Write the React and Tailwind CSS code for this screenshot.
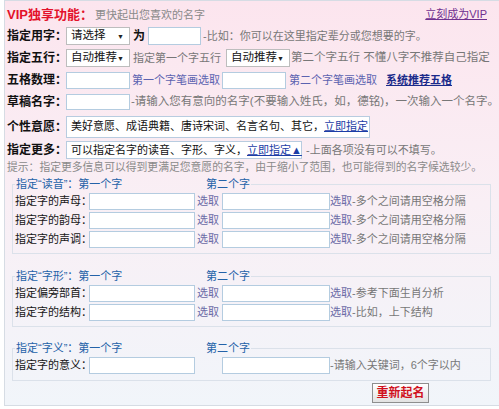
import React from "react";

function Sel({ text }) {
  return (
    <div className="flex items-center justify-between w-[64px] h-[18px] shrink-0 border border-[#bdbdbd] bg-white pl-[4px] pr-[5px]">
      <span className="text-[11.5px] text-[#111]">{text}</span>
      <span className="text-[7px] text-[#222]">▼</span>
    </div>
  );
}

function Field({ w, h = "h-[17px]" }) {
  return <input readOnly className={`${w} ${h} shrink-0 border border-[#b4cce0] bg-white outline-none`} />;
}

function Label({ children }) {
  return <span className="w-[59px] shrink-0 whitespace-nowrap text-[12px] font-bold text-[#111]">{children}</span>;
}

function SubRow({ label, pick = true, note }) {
  return (
    <div className="flex items-center h-[19px] whitespace-nowrap">
      <span className="w-[74px] shrink-0 text-[#151515]">{label}</span>
      <Field w="w-[106px]" />
      <span className="w-[27px] shrink-0 pl-[2px] text-[#6b6aa6]">{pick ? "选取" : ""}</span>
      <Field w="w-[108px]" />
      {pick && <span className="text-[#6b6aa6]">选取</span>}
      <span className="text-[#777]">{note}</span>
    </div>
  );
}

function Group({ title, className, children }) {
  return (
    <fieldset className={`${className} ml-[5px] w-[479px] border border-[#dbe1ea] pl-[2px] pb-[4px]`}>
      <legend className="px-[1px] leading-[14px] text-[#2462a8] whitespace-nowrap">
        <span className="inline-block w-[190px]">指定“{title}”：第一个字</span>第二个字
      </legend>
      <div className="mt-[1px]">{children}</div>
    </fieldset>
  );
}

export default function App() {
  return (
    <div className="w-[499px] h-[409px] overflow-hidden bg-white font-['Liberation_Sans','Noto_Sans_CJK_SC',sans-serif] text-[11px] leading-none text-[#222]">
      <div className="ml-[4px] h-[406px] border-t border-l border-b border-[#d6dce4] bg-linear-to-b from-[#fce5ee] via-[#f9eff5] to-[#f1f5fa] pl-[2px]">
        {/* header */}
        <div className="flex items-center justify-between h-[24px] pt-[3px] pr-[12px]">
          <div className="flex items-baseline whitespace-nowrap">
            <span className="text-[13px] font-bold text-[#e3122b]">VIP独享功能：</span>
            <span className="ml-[2px] text-[#8a8a8a]">更快起出您喜欢的名字</span>
          </div>
          <a className="text-[#70308f] underline">立刻成为VIP</a>
        </div>

        <div className="flex items-center h-[22px] whitespace-nowrap">
          <Label>指定用字：</Label>
          <Sel text="请选择" />
          <span className="ml-[3px] text-[12px] font-bold text-[#111]">为</span>
          <div className="ml-[3px]"><Field w="w-[53px]" h="h-[18px]" /></div>
          <span className="ml-[2px] text-[#777]">-比如：你可以在这里指定辈分或您想要的字。</span>
        </div>

        <div className="flex items-center h-[22px] whitespace-nowrap">
          <Label>指定五行：</Label>
          <Sel text="自动推荐" />
          <span className="w-[96px] shrink-0 pl-[3px] text-[#777]">指定第一个字五行</span>
          <Sel text="自动推荐" />
          <span className="ml-[1px] text-[11.5px] text-[#777]">第二个字五行 不懂八字不推荐自己指定</span>
        </div>

        <div className="flex items-center h-[22px] whitespace-nowrap">
          <Label>五格数理：</Label>
          <Field w="w-[64px]" />
          <span className="w-[92px] shrink-0 pl-[2px] text-[#5b63b0]">第一个字笔画选取</span>
          <Field w="w-[64px]" />
          <span className="w-[100px] shrink-0 pl-[3px] text-[#5b63b0]">第二个字笔画选取</span>
          <a className="font-bold text-[#1a2a8a] underline">系统推荐五格</a>
        </div>

        <div className="flex items-center h-[22px] whitespace-nowrap">
          <Label>草稿名字：</Label>
          <Field w="w-[64px]" h="h-[16px]" />
          <span className="ml-[1px] text-[11.5px] text-[#777]">-请输入您有意向的名字(不要输入姓氏，如，德铭)，一次输入一个名字。</span>
        </div>

        <div className="flex items-center h-[27px] whitespace-nowrap">
          <Label>个性意愿：</Label>
          <div className="flex items-center w-[304px] h-[22px] border border-[#b8cce0] bg-white pl-[4px]">
            <span className="text-[#111]">美好意愿、成语典籍、唐诗宋词、名言名句、其它，</span>
            <a className="text-[#1c3da6] underline">立即指定</a>
          </div>
        </div>

        <div className="flex items-center h-[20px] whitespace-nowrap">
          <Label>指定更多：</Label>
          <div className="flex items-center w-[236px] h-[18px] border border-[#b8cce0] bg-white pl-[4px]">
            <span className="text-[#111]">可以指定名字的读音、字形、字义，</span>
            <a className="text-[#1c3da6] underline">立即指定▲</a>
          </div>
          <span className="ml-[4px] text-[#777]">-上面各项没有可以不填写。</span>
        </div>

        <div className="h-[14px] leading-[14px] whitespace-nowrap text-[10.8px] text-[#8a8a8a]">
          提示：指定更多信息可以得到更满足您意愿的名字，由于缩小了范围，也可能得到的名字候选较少。
        </div>

        <Group title="读音" className="mt-[3px]">
          <SubRow label="指定字的声母：" note="-多个之间请用空格分隔" />
          <SubRow label="指定字的韵母：" note="-多个之间请用空格分隔" />
          <SubRow label="指定字的声调：" note="-多个之间请用空格分隔" />
        </Group>

        <Group title="字形" className="mt-[15px]">
          <SubRow label="指定偏旁部首：" note=" -参考下面生肖分析" />
          <SubRow label="指定字的结构：" note="-比如，上下结构" />
        </Group>

        <Group title="字义" className="mt-[14px] pb-[5px]">
          <SubRow label="指定字的意义：" pick={false} note="-请输入关键词，6个字以内" />
        </Group>

        <div className="flex pl-[365px] mt-[2px]">
          <button className="w-[57px] h-[20px] border border-[#8e8e8e] bg-linear-to-b from-white to-[#e2e2e2] text-[12px] font-bold text-[#d0101c]">
            重新起名
          </button>
        </div>
      </div>
    </div>
  );
}
